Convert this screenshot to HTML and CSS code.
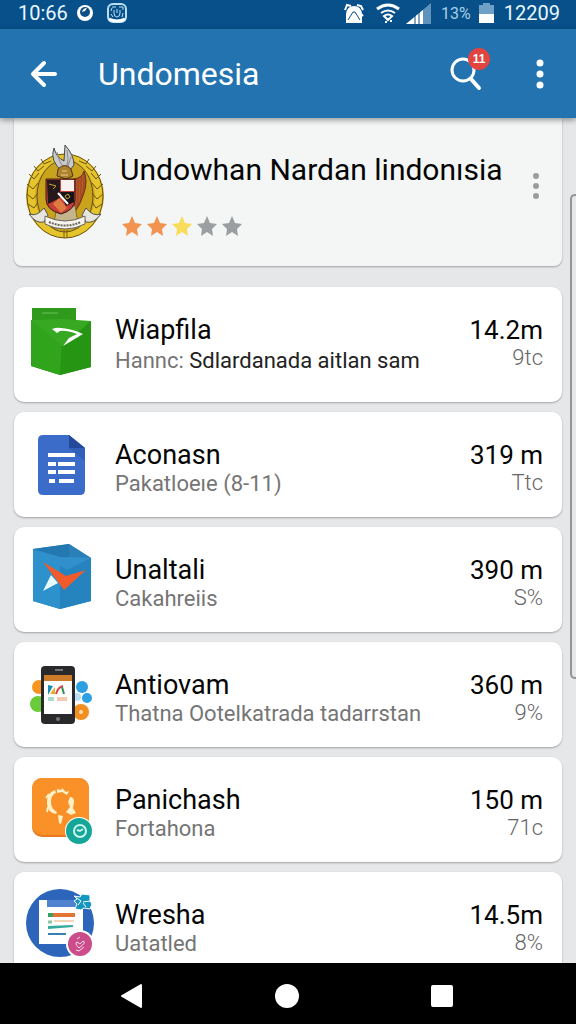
FILE: index.html
```html
<!DOCTYPE html>
<html lang="id">
<head>
    <meta charset="UTF-8">
    <meta name="viewport" content="width=device-width, initial-scale=1.0">
    <title>Undomesia</title>
    <link rel="stylesheet" href="styles.css">
</head>
<body>
    <div class="status-bar">
        <span class="status-time">10:66</span>
        <svg class="status-icon" width="18" height="20" viewBox="0 0 18 20">
            <circle cx="9" cy="10" r="8" fill="#fff"/>
            <circle cx="9" cy="9" r="5" fill="#0b4f86"/>
            <path d="M6 9q1-4 5-4l-2 3z" fill="#fff"/>
        </svg>
        <svg class="status-icon status-app" width="22" height="22" viewBox="0 0 22 22" fill="none" stroke="#b9def2">
            <rect x="2" y="2" width="18" height="18" rx="5" stroke-width="2"/>
            <path d="M3 17q8 4 16 0" stroke="#fff" stroke-width="3"/>
            <path d="M8 8v3q0 4 3 4t3-4V8M11 7v4M6 6l-1 3M13 5h4v3M6 5h4M5 12l2 3M17 11l-1 4" stroke-width="1"/>
        </svg>
        <span class="spacer"></span>
        <svg class="status-icon" width="20" height="22" viewBox="0 0 20 22">
            <path d="M2 21V12q1-8 8-8t8 8v9z" fill="#fff"/>
            <path d="M1 8l2-5 4 1M13 3l4 1 2 4M17 12l2 2" stroke="#fff" stroke-width="2" fill="none"/>
            <path d="M4 18l5-8 2 0 5 8" stroke="#0b4f86" fill="none"/>
        </svg>
        <svg class="status-icon wifi" width="24" height="22" viewBox="0 0 24 22" fill="none" stroke="#fff">
            <path d="M1 7q11-8 22 0" stroke-width="3"/>
            <path d="M5 11q7-5 14 0" stroke-width="2"/>
            <path d="M8 14q4-3 8 0l-4 4zM9 20h2M14 19h2" stroke-width="2"/>
        </svg>
        <svg class="status-icon signal" width="25" height="22" viewBox="0 0 25 22">
            <path d="M0 22L25 1v21z" fill="#5f93bb"/>
            <path d="M0 22L17 8v14z" fill="#fff"/>
            <path d="M9 12v10M13 9v13" stroke="#0b4f86"/>
        </svg>
        <span class="status-percent">13%</span>
        <svg class="status-icon" width="15" height="22" viewBox="0 0 15 22">
            <path d="M4 1h7v2h4v9H0V3h4z" fill="#6fa0c5"/>
            <path d="M0 12h15v9H0z" fill="#fff"/>
        </svg>
        <span class="status-clock">12209</span>
    </div>

    <header class="app-bar">
        <button class="icon-button" aria-label="Kembali">
            <svg width="28" height="28" viewBox="0 0 28 28" fill="none" stroke="#fff" stroke-width="4" stroke-linecap="round" stroke-linejoin="round">
                <path d="M25 14H3M14 3L3 14l11 11"/>
            </svg>
        </button>
        <h1>Undomesia</h1>
        <button class="icon-button search" aria-label="Cari">
            <svg width="34" height="36" viewBox="0 0 34 36" fill="none" stroke="#fff" stroke-linecap="round">
                <circle cx="14" cy="14" r="11" stroke-width="3"/>
                <path d="M22 23l8 9" stroke-width="4"/>
            </svg>
            <span class="badge">11</span>
        </button>
        <button class="icon-button more" aria-label="Menu">
            <svg width="8" height="30" viewBox="0 0 8 30" fill="#fff">
                <circle cx="4" cy="4" r="3.5"/><circle cx="4" cy="15" r="3.5"/><circle cx="4" cy="26" r="3.5"/>
            </svg>
        </button>
    </header>

    <main class="content">
        <section class="summary">
            <svg class="emblem" width="80" height="96" viewBox="0 0 80 96">
                <ellipse cx="40" cy="52" rx="39" ry="42" fill="#d3a91c"/>
                <ellipse cx="40" cy="52" rx="34" ry="38" fill="none" stroke="#e6c42c" stroke-width="8"/>
                <ellipse cx="40" cy="52" rx="38" ry="42" fill="none" stroke="#6b5412" stroke-width="1"/>
                <ellipse cx="40" cy="52" rx="28" ry="36" fill="#c9a31b" stroke="#665016" stroke-width="1"/>
                <path d="M4 30l5 5 5-6M2 40l6 5 5-6M2 50l6 5 5-6M3 60l6 4 4-6M9 22l4 5 6-5M16 15l3 5 7-3M76 30l-5 5-5-6M78 40l-6 5-5-6M78 50l-6 5-5-6M77 60l-6 4-4-6M71 22l-4 5-6-5M64 15l-3 5-7-3" fill="none" stroke="#6b5412" stroke-width="1"/>
                <path d="M38 28Q24 17 29 4q2 9 10 13L40 1q9 10 9 20l-8 10z" fill="#c9c9cb" stroke="#4c4a49"/>
                <path d="M32 8q2 11 7 15M42 6q2 9 0 16M46 13l-4 12" fill="none" stroke="#8b8b8e"/>
                <path d="M33 25q7-7 13 0l2 7-7 3-9-3z" fill="#ae812d" stroke="#4d3514"/>
                <path d="M37 27h5M36 31h7" stroke="#e5cf8b" stroke-width="1"/>
                <path d="M49 35q8-1 10-8 4 10 0 22-4 13-10 20z" fill="#a64a22" stroke="#6c3417"/>
                <path d="M52 36l-1 28M55 34l-1 24M58 31l-1 18" stroke="#b85d2e" fill="none"/>
                <path d="M32 62h18l4 22H28z" fill="#c5b58d" stroke="#806b2b"/>
                <path d="M21 35h29v20q0 11-14 15-15-4-15-15z" fill="#c83d38" stroke="#321c18" stroke-width="1"/>
                <path d="M22 36h13v18L23 60z" fill="#27181b"/>
                <path d="M36 36h13v11H36z" fill="#f8f1ef"/>
                <path d="M35 48h14v10l-8 4z" fill="#17131a"/>
                <path d="M33 49l10 11" stroke="#fff" stroke-width="2"/>
                <path d="M24 40l7 2-3 3M40 52l3-2 2 3-3 2z" fill="none" stroke="#c9a42c" stroke-width="1"/>
                <path d="M28 60l8 9 6-5-8-10z" fill="#df7b40"/>
                <path d="M4 70q8 3 15-6l4 7-4 7q-8 2-15-8zM76 70q-8 3-15-6l-4 7 4 7q8 2 15-8z" fill="#e6e5df" stroke="#55524b"/>
                <path d="M20 72q20 10 40 0v8q-20 10-40 0z" fill="#f5f3ec" stroke="#6b6559"/>
                <path d="M24 78q16 7 32 0" fill="none" stroke="#6b665f" stroke-width="2" stroke-dasharray="2 1"/>
                <path d="M39 86v8M42 86v8" stroke="#7a6013"/>
            </svg>
            <div class="summary-text">
                <h2>Undowhan Nardan lindonısia</h2>
                <div class="stars" role="img" aria-label="3 dari 5">
                    <svg class="star orange" viewBox="0 0 20 20"><path d="M10 0l3 7 7 1-5 5 1 7-6-4-6 4 1-7-5-5 7-1z"/></svg>
                    <svg class="star orange" viewBox="0 0 20 20"><path d="M10 0l3 7 7 1-5 5 1 7-6-4-6 4 1-7-5-5 7-1z"/></svg>
                    <svg class="star yellow" viewBox="0 0 20 20"><path d="M10 0l3 7 7 1-5 5 1 7-6-4-6 4 1-7-5-5 7-1z"/></svg>
                    <svg class="star" viewBox="0 0 20 20"><path d="M10 0l3 7 7 1-5 5 1 7-6-4-6 4 1-7-5-5 7-1z"/></svg>
                    <svg class="star" viewBox="0 0 20 20"><path d="M10 0l3 7 7 1-5 5 1 7-6-4-6 4 1-7-5-5 7-1z"/></svg>
                </div>
            </div>
            <button class="icon-button summary-more" aria-label="Opsi">
                <svg width="8" height="28" viewBox="0 0 8 28" fill="#9c9c9c">
                    <circle cx="4" cy="4" r="3"/><circle cx="4" cy="14" r="3"/><circle cx="4" cy="24" r="3"/>
                </svg>
            </button>
        </section>

        <ul class="app-list">
            <li class="card featured">
                <svg class="app-icon" viewBox="0 0 70 72">
                    <path d="M6 5h44v20H6z" fill="#2f9a1c"/>
                    <path d="M16 10h16" stroke="#6cc15b"/>
                    <path d="M5 17l31 3 29-2v46l-31 8-29-9z" fill="#279b13"/>
                    <path d="M5 17l31 26-2 29-29-9z" fill="#30a51b"/>
                    <path d="M36 43l29-25v46l-31 8z" fill="#259513"/>
                    <path d="M5 17l31-1 29 2-29 25z" fill="#37a822"/>
                    <path d="M26 26q5-2 9-1 12 1 22 6L37 43l6-8 8-4q-11-4-17-3l-3 2z" fill="#fff"/>
                </svg>
                <div class="app-info">
                    <h3>Wiapfila</h3>
                    <p>Hannc: <span class="dark">Sdlardanada aitlan sam</span></p>
                </div>
                <div class="app-stats"><strong>14.2m</strong><span>9tc</span></div>
            </li>
            <li class="card">
                <svg class="app-icon" viewBox="0 0 70 72">
                    <path d="M17 7h26l16 13v42q0 5-5 5H17q-5 0-5-5V12q0-5 5-5z" fill="#3b6cc9"/>
                    <path d="M43 20h16v13z" fill="#325fb7"/>
                    <path d="M43 7l16 13H43z" fill="#24499a"/>
                    <path d="M22 27h27M22 36h8M32 36h17M22 44h8M32 44h17M23 53h6M33 53h15" stroke="#fff" stroke-width="4"/>
                </svg>
                <div class="app-info">
                    <h3>Aconasn</h3>
                    <p>Pakatloeıe (8-11)</p>
                </div>
                <div class="app-stats"><strong>319 m</strong><span>Ttc</span></div>
            </li>
            <li class="card">
                <svg class="app-icon" viewBox="0 0 70 72">
                    <path d="M7 6l36-5 22 14v43l-31 8-27-8z" fill="#2b8cc9"/>
                    <path d="M7 6l36-5v13l-9 6z" fill="#2478b2"/>
                    <path d="M43 1l22 14-22-1z" fill="#2a7fb8"/>
                    <path d="M7 7l27 9v50L7 58z" fill="#2d91cc"/>
                    <path d="M34 20l31-5v43l-31 8z" fill="#2583be"/>
                    <path d="M7 6l27 8 31 1-24 12z" fill="#3090cc"/>
                    <path d="M25 32l7 8-15 8z" fill="#e5fbff"/>
                    <path d="M17 19l23 14 20-6-22 20z" fill="#f15a2b"/>
                </svg>
                <div class="app-info">
                    <h3>Unaltali</h3>
                    <p>Cakahreiis</p>
                </div>
                <div class="app-stats"><strong>390 m</strong><span>S%</span></div>
            </li>
            <li class="card">
                <svg class="app-icon" viewBox="0 0 70 72">
                    <circle cx="13" cy="29" r="7" fill="#f79422"/>
                    <circle cx="12" cy="46" r="8" fill="#69cb39"/>
                    <circle cx="56" cy="29" r="6" fill="#2ba0e2"/>
                    <circle cx="61" cy="40" r="5" fill="#2ba0e2"/>
                    <circle cx="51" cy="39" r="4" fill="#b7dff5"/>
                    <circle cx="55" cy="54" r="8" fill="#f38e20"/>
                    <circle cx="55" cy="54" r="2" fill="#ffe1b5"/>
                    <rect x="15" y="8" width="34" height="58" rx="4" fill="#29292c"/>
                    <path d="M29 12h8" stroke="#777" stroke-width="2"/>
                    <path d="M18 17h28v39H18z" fill="#fff"/>
                    <path d="M18 17h28v6H18z" fill="#cc7c28"/>
                    <path d="M22 37V27l5 1z" fill="#168fb0"/>
                    <path d="M24 36l5-7v7z" fill="#e5ad24"/>
                    <path d="M30 36q2-7 7-8" stroke="#df4444" stroke-width="2" fill="none"/>
                    <path d="M36 29l2 7" stroke="#368b58" stroke-width="2"/>
                    <path d="M22 40h6M22 42h6" stroke="#55b797"/>
                    <path d="M31 40h10M31 42h10" stroke="#e69360"/>
                    <circle cx="32" cy="61" r="2" fill="#777"/>
                </svg>
                <div class="app-info">
                    <h3>Antiovam</h3>
                    <p>Thatna Ootelkatrada tadarrstan</p>
                </div>
                <div class="app-stats"><strong>360 m</strong><span>9%</span></div>
            </li>
            <li class="card">
                <svg class="app-icon" viewBox="0 0 70 72">
                    <rect x="6" y="5" width="57" height="59" rx="10" fill="#e97820"/>
                    <rect x="6" y="5" width="57" height="57" rx="10" fill="#fa9028"/>
                    <path d="M29 17q-9 3-8 14 1 9 9 10l1-2q-6-3-6-10 0-7 5-9zM31 16l4 1 1-2 4 4 3-1-2 4-5-3-5 1zM44 24q4 0 4 5l-1 6 3 5-5 2-5-3 4-5-2-5zM32 42l5 1-2 8-2-1z" fill="#fff0c5"/>
                    <path d="M23 21l-3 4M22 34l-1 5" stroke="#fff0c5" stroke-width="2"/>
                    <circle cx="53" cy="58" r="14" fill="#fff"/>
                    <circle cx="53" cy="58" r="13" fill="#14a698"/>
                    <circle cx="54" cy="58" r="6" fill="none" stroke="#caf4ec" stroke-width="2"/>
                    <path d="M51 57l3 1 3-2" fill="none" stroke="#caf4ec" stroke-width="2"/>
                </svg>
                <div class="app-info">
                    <h3>Panichash</h3>
                    <p>Fortahona</p>
                </div>
                <div class="app-stats"><strong>150 m</strong><span>71c</span></div>
            </li>
            <li class="card">
                <svg class="app-icon" viewBox="0 0 70 72">
                    <circle cx="34" cy="35" r="34" fill="#2c65ba"/>
                    <path d="M13 12h44v44H13z" fill="#fff"/>
                    <path d="M21 12h30v7H21z" fill="#4f83cf"/>
                    <path d="M22 27h5" stroke="#399f65" stroke-width="4"/>
                    <path d="M27 27h22" stroke="#e37533" stroke-width="4"/>
                    <path d="M22 34h4" stroke="#8bc69e" stroke-width="3"/>
                    <path d="M28 33h20" stroke="#f4d5b8" stroke-width="2"/>
                    <path d="M22 38l25-1v2l-25 2z" fill="#35a99d"/>
                    <path d="M22 46h18" stroke="#3480ae" stroke-width="2"/>
                    <path d="M48 8l6 1 2-3 8 1v6l2 3-2 5-6-1-3 2-6-1 2-5-3-3 3-2z" fill="#1497bf" stroke="#fff" stroke-width="1"/>
                    <path d="M49 9l6 4-3 4M57 14l7-1M57 15l3 4" fill="none" stroke="#fff" stroke-width="1"/>
                    <circle cx="54" cy="56" r="14" fill="#fff"/>
                    <circle cx="54" cy="56" r="12" fill="#cb4c88"/>
                    <path d="M53 60q-5-5-2-6l3 2 3-3q4 1-4 7zM51 51l3-2M50 62l3 1 5-4" fill="none" stroke="#ffdfed" stroke-width="1"/>
                </svg>
                <div class="app-info">
                    <h3>Wresha</h3>
                    <p>Uatatled</p>
                </div>
                <div class="app-stats"><strong>14.5m</strong><span>8%</span></div>
            </li>
        </ul>
        <div class="edge-panel"></div>
    </main>

    <nav class="nav-bar">
        <button class="icon-button" aria-label="Kembali">
            <svg width="24" height="26" viewBox="0 0 24 26"><path d="M22 2v22L3 13z" fill="#fff" stroke="#fff" stroke-width="2" stroke-linejoin="round"/></svg>
        </button>
        <button class="icon-button" aria-label="Beranda">
            <svg width="24" height="24" viewBox="0 0 24 24"><circle cx="12" cy="12" r="12" fill="#fff"/></svg>
        </button>
        <button class="icon-button" aria-label="Terkini">
            <svg width="22" height="22" viewBox="0 0 22 22"><rect width="22" height="22" rx="2" fill="#fff"/></svg>
        </button>
    </nav>
</body>
</html>
```

FILE: styles.css
```css
* {
    box-sizing: border-box;
}

body {
    display: flex;
    flex-direction: column;
    height: 100vh;
    margin: 0;
    overflow: hidden;
    font-family: Roboto, "Liberation Sans", sans-serif;
    color: #050505;
    background-color: #e6e7e9;
}

h1, h2, h3, p, ul {
    margin: 0;
    padding: 0;
    font-weight: 400;
}

svg {
    display: block;
    flex-shrink: 0;
}

.icon-button {
    display: flex;
    align-items: center;
    justify-content: center;
    padding: 0;
    border: none;
    background: none;
}

/* status bar */
.status-bar {
    display: flex;
    align-items: center;
    flex-shrink: 0;
    height: 29px;
    padding: 0 16px 3px 18px;
    font-size: 20px;
    color: #e9f8ff;
    background-color: #07508a;
}

.status-icon {
    margin-left: 8px;
}

.status-app {
    margin-left: 12px;
}

.wifi {
    margin-left: 12px;
}

.signal {
    margin-left: 6px;
}

.spacer {
    flex: 1;
}

.status-percent {
    margin-left: 10px;
    font-size: 16px;
    color: #a8cfe8;
}

.status-clock {
    margin-left: 10px;
}

/* app bar */
.app-bar {
    display: flex;
    align-items: center;
    flex-shrink: 0;
    height: 89px;
    padding: 0 32px 0 30px;
    color: #fff;
    background-color: #2273b0;
    box-shadow: 0 2px 6px rgba(0, 0, 0, 0.4);
    z-index: 1;
}

.app-bar h1 {
    flex: 1;
    margin-left: 40px;
    font-size: 32px;
    line-height: 40px;
}

.search {
    position: relative;
    margin-right: 53px;
}

.badge {
    position: absolute;
    top: -8px;
    left: 19px;
    width: 22px;
    height: 22px;
    border-radius: 50%;
    font-size: 12px;
    font-weight: 700;
    line-height: 22px;
    color: #fff;
    background-color: #e2443f;
}

/* content */
.content {
    position: relative;
    flex: 1;
    min-height: 0;
    padding: 0 14px;
    overflow: hidden;
}

.summary {
    display: flex;
    align-items: flex-start;
    height: 148px;
    padding: 26px 22px 0 11px;
    border-radius: 0 0 8px 8px;
    background-color: #f4f6f6;
    box-shadow: 0 1px 2px rgba(0, 0, 0, 0.3);
}

.summary-text {
    flex: 1;
    margin-left: 15px;
}

.summary h2 {
    font-size: 30px;
    line-height: 52px;
    white-space: nowrap;
}

.stars {
    display: flex;
    gap: 5px;
    margin: 20px 0 0 2px;
}

.star {
    width: 20px;
    height: 20px;
    fill: #9b9fa2;
}

.star.orange {
    fill: #f29450;
}

.star.yellow {
    fill: #f8dc5c;
}

.summary-more {
    margin-top: 28px;
}

.app-list {
    display: flex;
    flex-direction: column;
    gap: 10px;
    margin-top: 21px;
    list-style: none;
}

.card {
    display: flex;
    align-items: flex-start;
    padding: 16px 19px 17px 12px;
    border-radius: 10px;
    background-color: #fff;
    box-shadow: 0 1px 2px rgba(0, 0, 0, 0.3);
}

.featured {
    padding-bottom: 25px;
}

.app-icon {
    width: 70px;
    height: 72px;
    overflow: visible;
}

.app-info {
    flex: 1;
    margin-left: 19px;
    padding-top: 12px;
    white-space: nowrap;
}

.app-info h3 {
    font-size: 27px;
    line-height: 30px;
}

.app-info p {
    font-size: 22px;
    line-height: 28px;
    color: #757575;
}

.featured .app-info p {
    line-height: 32px;
}

.app-info .dark {
    color: #222;
}

.app-stats {
    display: flex;
    flex-direction: column;
    align-items: flex-end;
    padding-top: 12px;
}

.app-stats strong {
    font-size: 26px;
    font-weight: 400;
    line-height: 30px;
}

.app-stats span {
    font-size: 22px;
    font-weight: 300;
    line-height: 26px;
    color: #666;
}

/* edge panel handle over the right side */
.edge-panel {
    position: absolute;
    top: 76px;
    right: 0;
    width: 6px;
    height: 485px;
    border: 2px solid #929497;
    border-right: none;
    border-radius: 5px 0 0 5px;
}

/* navigation bar */
.nav-bar {
    display: flex;
    align-items: center;
    justify-content: center;
    gap: 132px;
    flex-shrink: 0;
    height: 61px;
    padding: 4px 4px 0 0;
    background-color: #000;
}
```
